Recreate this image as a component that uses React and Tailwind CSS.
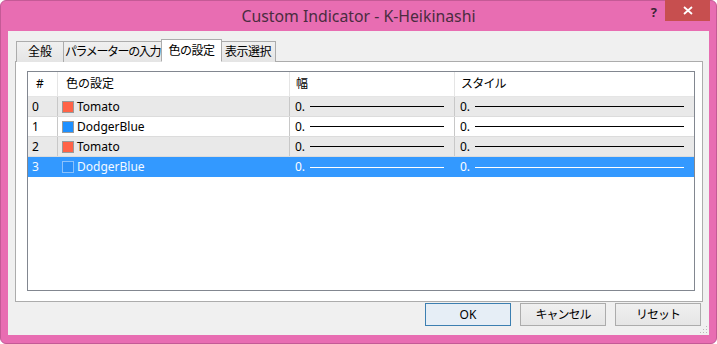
import React from 'react';

const font = { fontFamily: '"Noto Sans", "Noto Sans CJK JP", sans-serif' };

const rows = [
  { id: 0, name: 'Tomato', color: 'bg-[#ff6347]', bg: 'bg-[#e9e9e9]' },
  { id: 1, name: 'DodgerBlue', color: 'bg-[#1e90ff]', bg: 'bg-white' },
  { id: 2, name: 'Tomato', color: 'bg-[#ff6347]', bg: 'bg-[#e9e9e9]' },
  { id: 3, name: 'DodgerBlue', color: 'bg-[#2b8ff7]', bg: 'bg-[#3399ff]', selected: true },
];

const tabs = [
  { label: '全般', w: 'w-[48px]' },
  { label: 'パラメーターの入力', w: 'w-[99px] tracking-[-1.4px]' },
  { label: '色の設定', w: 'w-[61px] tracking-[-0.5px]', active: true },
  { label: '表示選択', w: 'w-[56px] tracking-[-0.5px]' },
];

const LineCell = ({ width, selected, last }) => (
  <div
    className={`${width} flex items-center pl-[5px] ${last ? '' : 'border-r'} ${
      selected ? 'border-[#3399ff] text-white' : 'border-[#c8c8c8]'
    }`}
  >
    <span>0.</span>
    <div className={`flex-1 ml-[5px] mr-[10px] h-px ${selected ? 'bg-white' : 'bg-black'}`} />
  </div>
);

const App = () => {
  return (
    <div
      className="relative w-[717px] h-[344px] bg-[#e86db2] border border-[#c45a96] rounded-[6px] flex flex-col px-[7px] pb-[8px] text-[12px] text-black"
      style={font}
    >
      {/* Title bar */}
      <div className="h-[30px] flex items-center justify-center">
        <span className="text-[15.8px] text-[#4a2c40] mt-[1px]">Custom Indicator - K-Heikinashi</span>
      </div>
      <span className="absolute top-[2px] right-[59px] text-[13px] font-bold text-[#3d2535]">?</span>
      <div className="absolute top-[-1px] right-[6px] w-[45px] h-[21px] bg-[#c74f4f] flex items-center justify-center">
        <svg width="10" height="9" viewBox="0 0 10 9">
          <path d="M1 1 L9 8 M9 1 L1 8" stroke="white" strokeWidth="1.8" />
        </svg>
      </div>

      {/* Client area */}
      <div className="relative flex-1 bg-[#f0f0f0] flex flex-col pl-[7px] pr-[6px] pt-[8px]">
        {/* Tabs */}
        <div className="flex items-end h-[23px] pl-[1px] relative z-10">
          {tabs.map((t) => (
            <div
              key={t.label}
              className={`${t.w} whitespace-nowrap flex items-center justify-center border border-[#acacac] ${
                t.active
                  ? 'h-[23px] bg-white border-b-white -mx-[1px] relative z-10'
                  : 'h-[21px] -ml-px first:ml-0 bg-gradient-to-b from-[#f0f0f0] to-[#e5e5e5] border-b-0'
              }`}
            >
              {t.label}
            </div>
          ))}
        </div>

        {/* Tab panel */}
        <div className="h-[241px] -mt-px bg-white border border-[#acacac] pl-[11px] pt-[9px]">
          <div className="w-[668px] h-[220px] border border-[#828790] bg-white">
            {/* Header */}
            <div className="flex h-[25px] border-b border-[#e5e5e5]">
              <div className="w-[30px] flex items-center pl-[8px] border-r border-[#e5e5e5]">#</div>
              <div className="w-[232px] flex items-center pl-[8px] border-r border-[#e5e5e5]">色の設定</div>
              <div className="w-[165px] flex items-center pl-[6px] border-r border-[#e5e5e5]">幅</div>
              <div className="flex-1 flex items-center pl-[6px] tracking-[-0.8px]">スタイル</div>
            </div>
            {rows.map((r) => (
              <div
                key={r.id}
                className={`flex h-[20px] ${r.bg} ${r.selected ? 'text-[#f4f9ff]' : 'border-b border-[#dcdcdc]'}`}
              >
                <div
                  className={`w-[30px] flex items-center pl-[4px] border-r ${
                    r.selected ? 'border-[#3399ff]' : 'border-[#c8c8c8]'
                  }`}
                >
                  {r.id}
                </div>
                <div
                  className={`w-[232px] flex items-center pl-[4px] border-r ${
                    r.selected ? 'border-[#3399ff]' : 'border-[#c8c8c8]'
                  }`}
                >
                  <span
                    className={`block shrink-0 w-[12px] h-[12px] mr-[3px] border ${r.color} ${
                      r.selected ? 'border-[#8cc2fb]' : 'border-[#9a9a9a]'
                    }`}
                  />
                  <span>{r.name}</span>
                </div>
                <LineCell width="w-[165px]" selected={r.selected} />
                <LineCell width="flex-1" selected={r.selected} last />
              </div>
            ))}
          </div>
        </div>

        {/* Buttons */}
        <div className="flex justify-end gap-[9px] mt-px pr-[2px]">
          <button className="w-[86px] h-[23px] border border-[#3c7fb1] bg-[#e6eef6] text-black">OK</button>
          <button className="w-[86px] h-[23px] border border-[#acacac] bg-gradient-to-b from-[#f0f0f0] to-[#e5e5e5] text-black tracking-[-1px]">
            キャンセル
          </button>
          <button className="w-[86px] h-[23px] border border-[#acacac] bg-gradient-to-b from-[#f0f0f0] to-[#e5e5e5] text-black tracking-[-1px]">
            リセット
          </button>
        </div>

        {/* Size grip */}
        <svg className="absolute right-[1px] bottom-[1px]" width="8" height="8" viewBox="0 0 8 8">
          <g fill="#b8b8b8">
            <rect x="6" y="0" width="1" height="1" />
            <rect x="3" y="3" width="1" height="1" />
            <rect x="6" y="3" width="1" height="1" />
            <rect x="0" y="6" width="1" height="1" />
            <rect x="3" y="6" width="1" height="1" />
            <rect x="6" y="6" width="1" height="1" />
          </g>
        </svg>
      </div>
    </div>
  );
};

export default App;
